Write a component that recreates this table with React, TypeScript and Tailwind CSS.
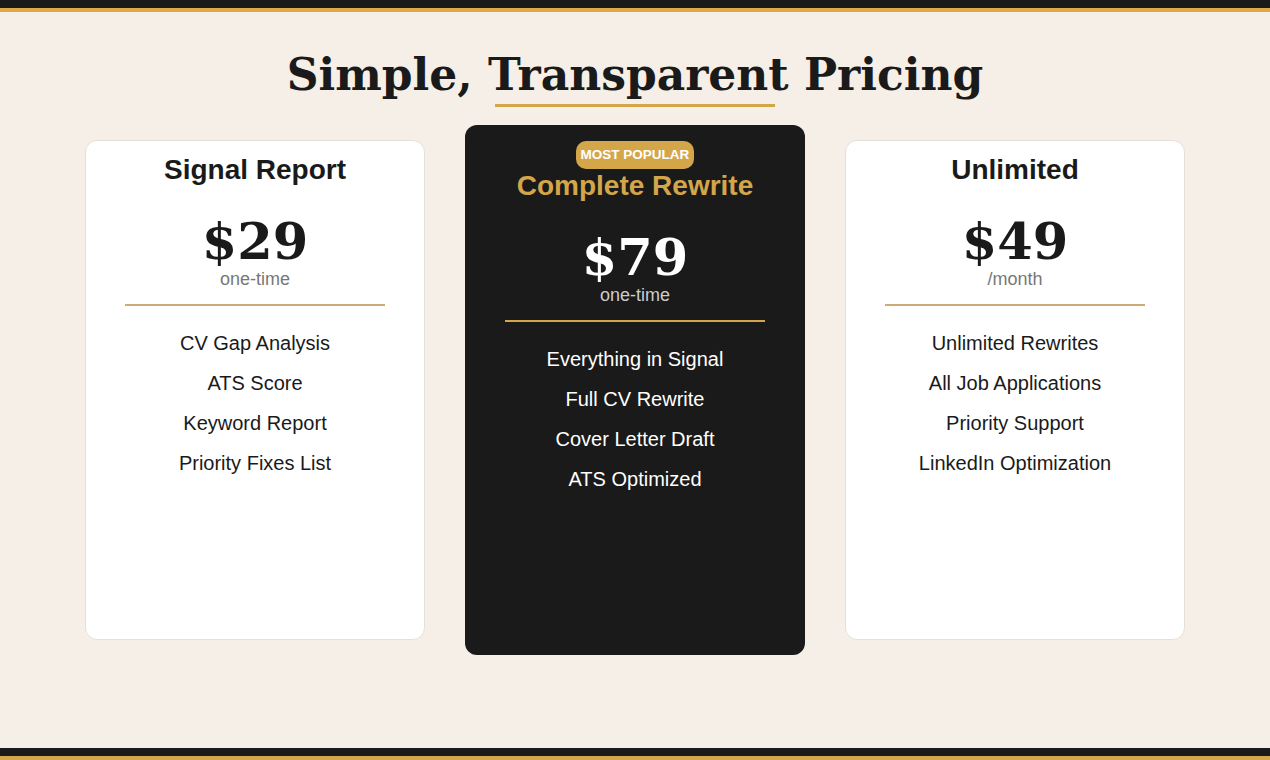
import React from "react";

const serif = { fontFamily: '"DejaVu Serif", Georgia, serif' };

type Plan = {
  title: string;
  price: string;
  period: string;
  features: string[];
  featured?: boolean;
};

const plans: Plan[] = [
  {
    title: "Signal Report",
    price: "$29",
    period: "one-time",
    features: ["CV Gap Analysis", "ATS Score", "Keyword Report", "Priority Fixes List"],
  },
  {
    title: "Complete Rewrite",
    price: "$79",
    period: "one-time",
    features: ["Everything in Signal", "Full CV Rewrite", "Cover Letter Draft", "ATS Optimized"],
    featured: true,
  },
  {
    title: "Unlimited",
    price: "$49",
    period: "/month",
    features: ["Unlimited Rewrites", "All Job Applications", "Priority Support", "LinkedIn Optimization"],
  },
];

function Card({ plan }: { plan: Plan }) {
  const f = plan.featured;
  return (
    <div
      className={
        f
          ? "w-[340px] h-[530px] rounded-[12px] bg-[#1a1a1a] pt-[16px] px-[40px] flex flex-col items-center"
          : "w-[340px] h-[500px] rounded-[12px] bg-white border border-[#e6e0d6] pt-[12px] px-[39px] flex flex-col items-center"
      }
    >
      {f && (
        <div className="h-[28px] px-[5px] rounded-[10px] bg-[#d4a64a] text-white text-[13.5px] leading-[28px] font-bold uppercase">
          Most Popular
        </div>
      )}
      <h3
        className={
          "text-[28px] leading-[34px] font-bold " + (f ? "text-[#d4a64a]" : "text-[#1a1a1a]")
        }
      >
        {plan.title}
      </h3>
      <div
        style={serif}
        className={"mt-[28px] text-[51px] leading-[52px] font-bold " + (f ? "text-white" : "text-[#1a1a1a]")}
      >
        {plan.price}
      </div>
      <div
        className={"mt-[1px] text-[18px] leading-[22px] " + (f ? "text-[#cccccc]" : "text-[#777777]")}
      >
        {plan.period}
      </div>
      <div className={"mt-[14px] h-[2px] w-[260px] " + (f ? "bg-[#d4a64a]" : "bg-[#cfaa78]")} />
      <ul className="mt-[17px] flex flex-col items-center">
        {plan.features.map((x) => (
          <li
            key={x}
            className={"text-[20px] leading-[40px] " + (f ? "text-white" : "text-[#1a1a1a]")}
          >
            {x}
          </li>
        ))}
      </ul>
    </div>
  );
}

export default function App() {
  return (
    <div
      className="w-[1270px] h-[760px] bg-[#f5efe7] flex flex-col"
      style={{ fontFamily: '"Liberation Sans", Arial, Helvetica, sans-serif' }}
    >
      <div className="h-[8px] bg-[#1a1a1a]" />
      <div className="h-[4px] bg-[#dfaa45]" />
      <main className="flex-1 flex flex-col items-center pt-[40px]">
        <h1 style={serif} className="text-[44px] leading-[45px] font-bold text-[#1a1a1a]">
          Simple, Transparent Pricing
        </h1>
        <div className="mt-[7px] h-[3px] w-[280px] bg-[#d4a64a]" />
        <div className="mt-[18px] flex items-center gap-[40px]">
          {plans.map((p) => (
            <Card key={p.title} plan={p} />
          ))}
        </div>
      </main>
      <div className="h-[8px] bg-[#1a1a1a]" />
      <div className="h-[4px] bg-[#d4a64a]" />
    </div>
  );
}
